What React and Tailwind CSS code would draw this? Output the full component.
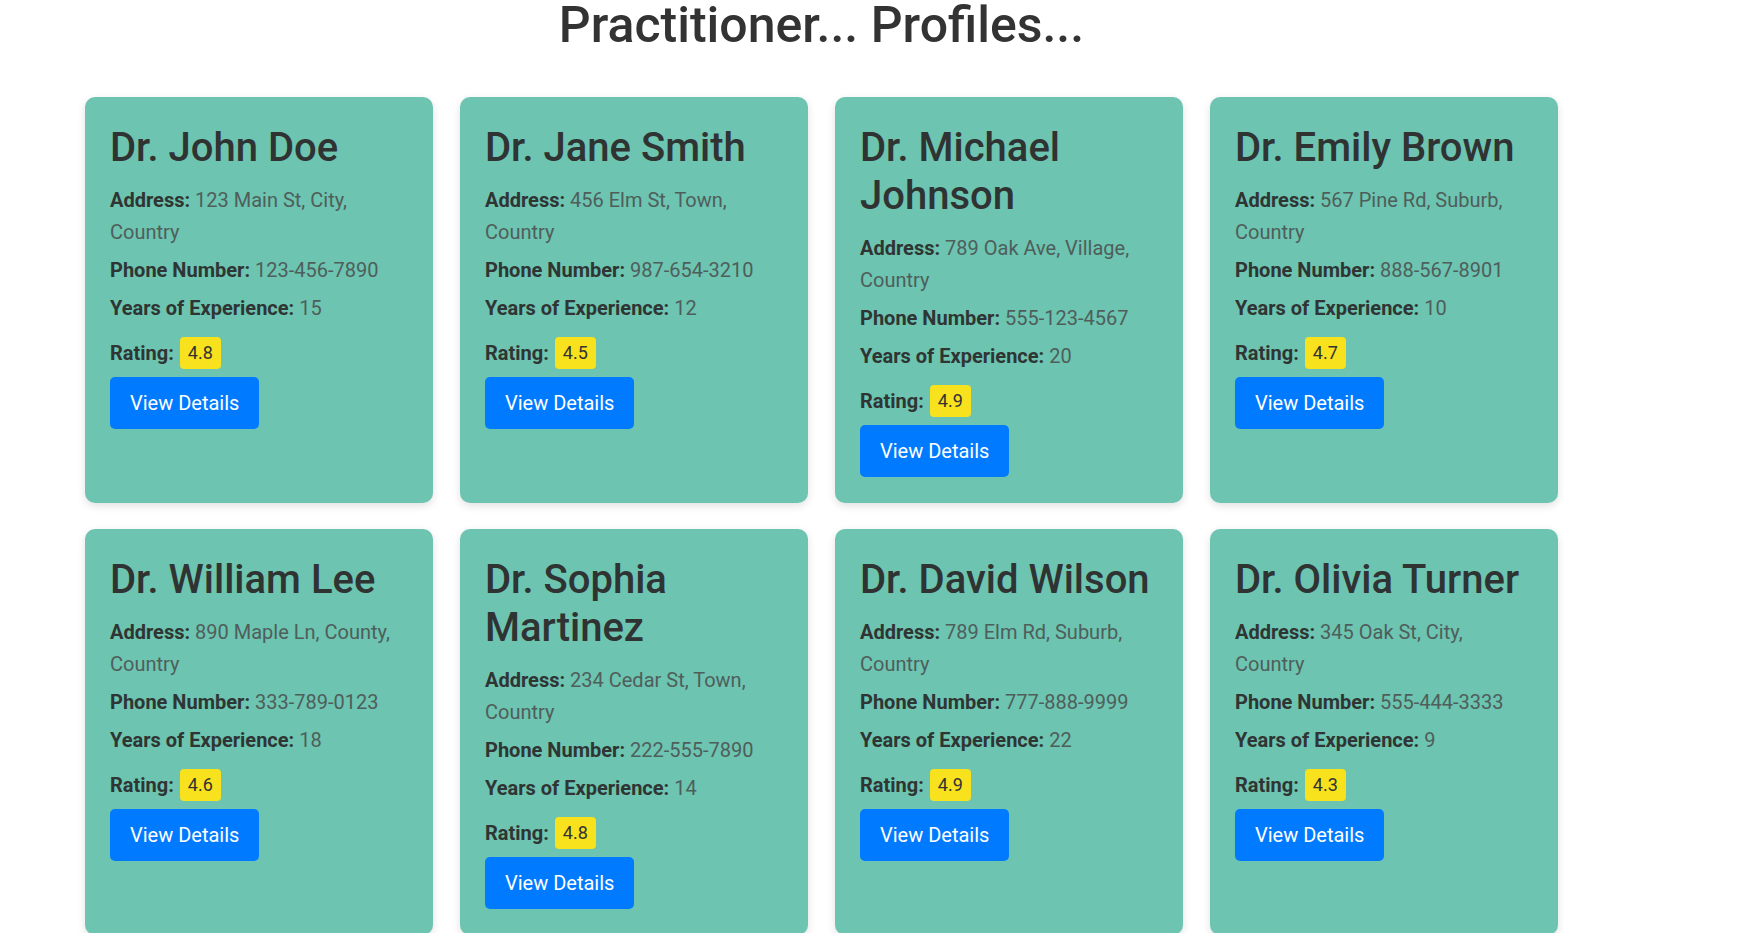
const practitioners = [
  { name: 'Dr. John Doe', address: '123 Main St, City, Country', phone: '123-456-7890', years: 15, rating: '4.8' },
  { name: 'Dr. Jane Smith', address: '456 Elm St, Town, Country', phone: '987-654-3210', years: 12, rating: '4.5' },
  { name: 'Dr. Michael Johnson', address: '789 Oak Ave, Village, Country', phone: '555-123-4567', years: 20, rating: '4.9' },
  { name: 'Dr. Emily Brown', address: '567 Pine Rd, Suburb, Country', phone: '888-567-8901', years: 10, rating: '4.7' },
  { name: 'Dr. William Lee', address: '890 Maple Ln, County, Country', phone: '333-789-0123', years: 18, rating: '4.6' },
  { name: 'Dr. Sophia Martinez', address: '234 Cedar St, Town, Country', phone: '222-555-7890', years: 14, rating: '4.8' },
  { name: 'Dr. David Wilson', address: '789 Elm Rd, Suburb, Country', phone: '777-888-9999', years: 22, rating: '4.9' },
  { name: 'Dr. Olivia Turner', address: '345 Oak St, City, Country', phone: '555-444-3333', years: 9, rating: '4.3' },
]

function Field({ label, value, className = '' }) {
  return (
    <p className={`text-[20px] leading-[32px] ${className}`}>
      <span className="font-bold text-[#2f3533]">{label}:</span>{' '}
      <span className="text-[#4f5e5a]">{value}</span>
    </p>
  )
}

function PractitionerCard({ p }) {
  return (
    <div className="w-[348px] rounded-[10px] bg-[#6cc4b1] px-[25px] pt-[27px] pb-[26px] shadow-[0_3px_8px_rgba(0,0,0,0.12)]">
      <h2 className="mb-[12px] text-[40px] leading-[48px] font-medium text-[#2f3332]">{p.name}</h2>
      <Field label="Address" value={p.address} className="mb-[6px]" />
      <Field label="Phone Number" value={p.phone} className="mb-[6px]" />
      <Field label="Years of Experience" value={p.years} />
      <div className="mt-[12.5px] flex h-[32.6px] items-center gap-[6px] text-[20px]">
        <span className="font-bold text-[#2f3533]">Rating:</span>
        <span className="flex h-[32.6px] items-center rounded-[4px] bg-[#f8e11d] px-[8px] text-[18px] text-[#333]">
          {p.rating}
        </span>
      </div>
      <button className="mt-[8px] flex h-[52px] items-center rounded-[5px] bg-[#007bff] px-[20px] text-[20px] text-white">
        View Details
      </button>
    </div>
  )
}

export default function App() {
  return (
    <div className="min-h-screen bg-white font-['Roboto',sans-serif]">
      <div className="ml-[85px] w-[1473px]">
        <h1 className="mb-[47px] text-center text-[50px] leading-[50px] font-medium text-[#333]">
          Practitioner... Profiles...
        </h1>
        <div className="flex flex-wrap gap-x-[27px] gap-y-[26px]">
          {practitioners.map((p) => (
            <PractitionerCard key={p.name} p={p} />
          ))}
        </div>
      </div>
    </div>
  )
}
